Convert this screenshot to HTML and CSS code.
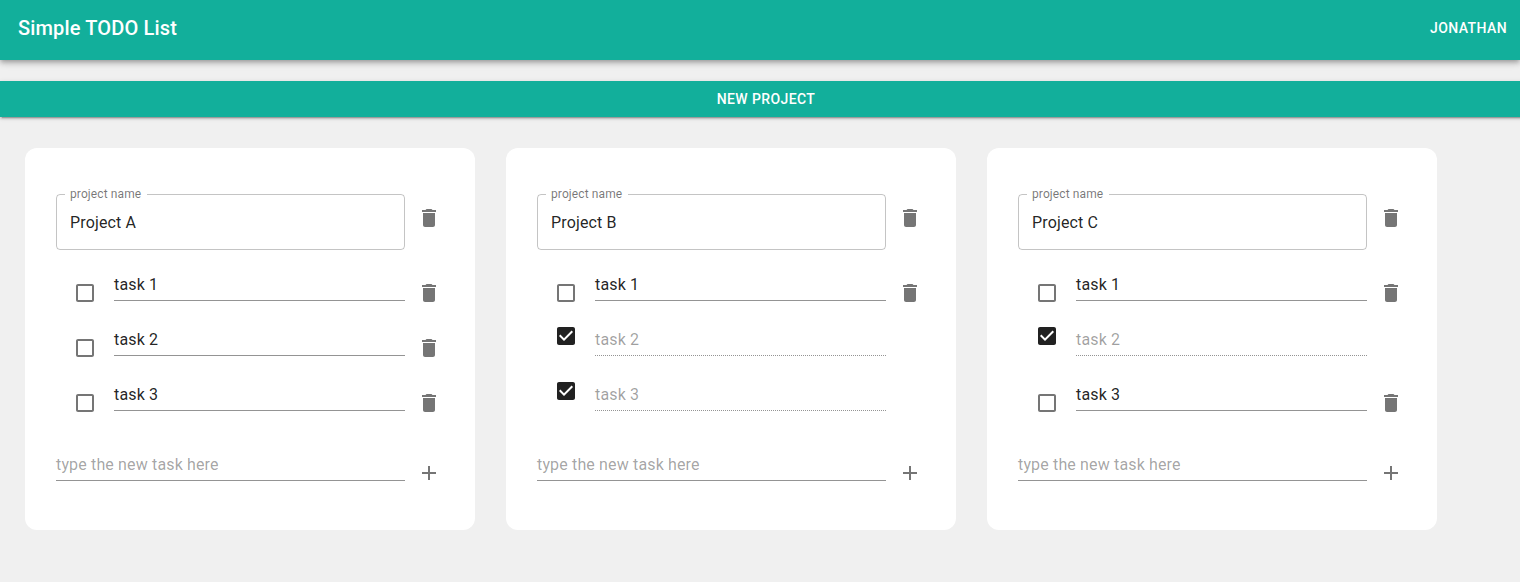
FILE: index.html
```html
<!DOCTYPE html>
<html lang="en">
<head>
<meta charset="utf-8">
<title>Simple TODO List</title>
<link rel="stylesheet" href="styles.css">
</head>
<body>
<svg class="sprite" aria-hidden="true">
  <symbol id="trash" viewBox="0 0 24 24"><path d="M6 19c0 1.1.9 2 2 2h8c1.1 0 2-.9 2-2V7H6v12zM19 4h-3.5l-1-1h-5l-1 1H5v2h14V4z"/></symbol>
  <symbol id="plus" viewBox="0 0 24 24"><path d="M19 13h-6v6h-2v-6H5v-2h6V5h2v6h6v2z"/></symbol>
  <symbol id="box" viewBox="0 0 24 24"><path d="M19 5v14H5V5h14m0-2H5c-1.1 0-2 .9-2 2v14c0 1.1.9 2 2 2h14c1.1 0 2-.9 2-2V5c0-1.1-.9-2-2-2z"/></symbol>
  <symbol id="checked" viewBox="0 0 24 24"><path d="M19 3H5c-1.11 0-2 .9-2 2v14c0 1.1.89 2 2 2h14c1.11 0 2-.9 2-2V5c0-1.1-.89-2-2-2zm-9 14l-5-5 1.41-1.41L10 14.17l7.59-7.59L19 8l-9 9z"/></symbol>
</svg>
<header class="appbar">
  <h1 class="title">Simple TODO List</h1>
  <span class="user">Jonathan</span>
</header>
<button class="new-project">New Project</button>
<main class="projects">
  <section class="card">
    <div class="row name-row">
      <div class="outlined"><span class="label">project name</span>Project A</div>
      <svg class="icon"><use href="#trash"/></svg>
    </div>
    <div class="tasks">
      <div class="row task"><svg class="icon check"><use href="#box"/></svg><span class="field">task 1</span><svg class="icon"><use href="#trash"/></svg></div>
      <div class="row task"><svg class="icon check"><use href="#box"/></svg><span class="field">task 2</span><svg class="icon"><use href="#trash"/></svg></div>
      <div class="row task"><svg class="icon check"><use href="#box"/></svg><span class="field">task 3</span><svg class="icon"><use href="#trash"/></svg></div>
    </div>
    <div class="row"><span class="field hint">type the new task here</span><svg class="icon"><use href="#plus"/></svg></div>
  </section>
  <section class="card">
    <div class="row name-row">
      <div class="outlined"><span class="label">project name</span>Project B</div>
      <svg class="icon"><use href="#trash"/></svg>
    </div>
    <div class="tasks">
      <div class="row task"><svg class="icon check"><use href="#box"/></svg><span class="field">task 1</span><svg class="icon"><use href="#trash"/></svg></div>
      <div class="row task done"><svg class="icon check"><use href="#checked"/></svg><span class="field">task 2</span></div>
      <div class="row task done"><svg class="icon check"><use href="#checked"/></svg><span class="field">task 3</span></div>
    </div>
    <div class="row"><span class="field hint">type the new task here</span><svg class="icon"><use href="#plus"/></svg></div>
  </section>
  <section class="card">
    <div class="row name-row">
      <div class="outlined"><span class="label">project name</span>Project C</div>
      <svg class="icon"><use href="#trash"/></svg>
    </div>
    <div class="tasks">
      <div class="row task"><svg class="icon check"><use href="#box"/></svg><span class="field">task 1</span><svg class="icon"><use href="#trash"/></svg></div>
      <div class="row task done"><svg class="icon check"><use href="#checked"/></svg><span class="field">task 2</span></div>
      <div class="row task"><svg class="icon check"><use href="#box"/></svg><span class="field">task 3</span><svg class="icon"><use href="#trash"/></svg></div>
    </div>
    <div class="row"><span class="field hint">type the new task here</span><svg class="icon"><use href="#plus"/></svg></div>
  </section>
</main>
</body>
</html>
```
FILE: styles.css
```css
* { box-sizing: border-box; }
body {
  margin: 0;
  background: #f0f0f0;
  font-family: Roboto, "Liberation Sans", sans-serif;
  font-size: 16px;
  letter-spacing: 0.15px;
  color: rgba(0, 0, 0, 0.87);
  overflow: hidden;
}
.sprite { display: none; }
.appbar {
  display: flex;
  justify-content: space-between;
  height: 60px;
  padding: 12px 13px 0 18px;
  background: #12af9b;
  color: #fff;
  line-height: 32px;
  box-shadow: 0 2px 4px -1px rgba(0,0,0,.2), 0 4px 5px 0 rgba(0,0,0,.14), 0 1px 10px 0 rgba(0,0,0,.12);
}
.title { margin: 0; font-size: 20px; font-weight: 500; letter-spacing: 0.15px; }
.user { font-size: 14px; font-weight: 500; letter-spacing: 0.4px; text-transform: uppercase; }
.new-project {
  display: block;
  width: 1532px;
  height: 36px;
  margin: 21px 0 0;
  padding: 0;
  border: 0;
  background: #12af9b;
  color: #fff;
  font: 500 14px/24px Roboto, "Liberation Sans", sans-serif;
  letter-spacing: 0.4px;
  text-transform: uppercase;
  box-shadow: 0 3px 1px -2px rgba(0,0,0,.2), 0 2px 2px 0 rgba(0,0,0,.14), 0 1px 5px 0 rgba(0,0,0,.12);
}
.projects { display: flex; gap: 31px; padding: 31px 25px; }
.card {
  flex: none;
  width: 450px;
  height: 382px;
  padding: 46px 34px 0 31px;
  border-radius: 12px;
  background: #fff;
}
.row { display: flex; align-items: flex-start; }
.icon { flex: none; width: 24px; height: 24px; margin: 12px 0 0 12px; fill: rgba(0, 0, 0, 0.54); }
.outlined {
  position: relative;
  width: 349px;
  height: 56px;
  padding: 0 13px;
  border: 1px solid rgba(0, 0, 0, 0.23);
  border-radius: 4px;
  line-height: 55px;
}
.label {
  position: absolute;
  top: -8px;
  left: 8px;
  width: 82px;
  padding-left: 5px;
  background: #fff;
  color: rgba(0, 0, 0, 0.54);
  font-size: 12px;
  line-height: 14px;
  letter-spacing: 0.11px;
  white-space: nowrap;
}
.tasks { padding-top: 19px; height: 199px; }
.task { height: 55px; padding-left: 17px; }
.check { margin: 12px 17px 0 0; }
.field {
  flex: none;
  width: 349px;
  height: 32px;
  border-bottom: 1px solid rgba(0, 0, 0, 0.42);
  line-height: 31px;
}
.task .field { width: 291px; }
.done .check { margin-top: 0; fill: rgba(0, 0, 0, 0.87); }
.done .field { color: rgba(0, 0, 0, 0.38); border-bottom-style: dotted; }
.hint { color: rgba(0, 0, 0, 0.37); }
```
